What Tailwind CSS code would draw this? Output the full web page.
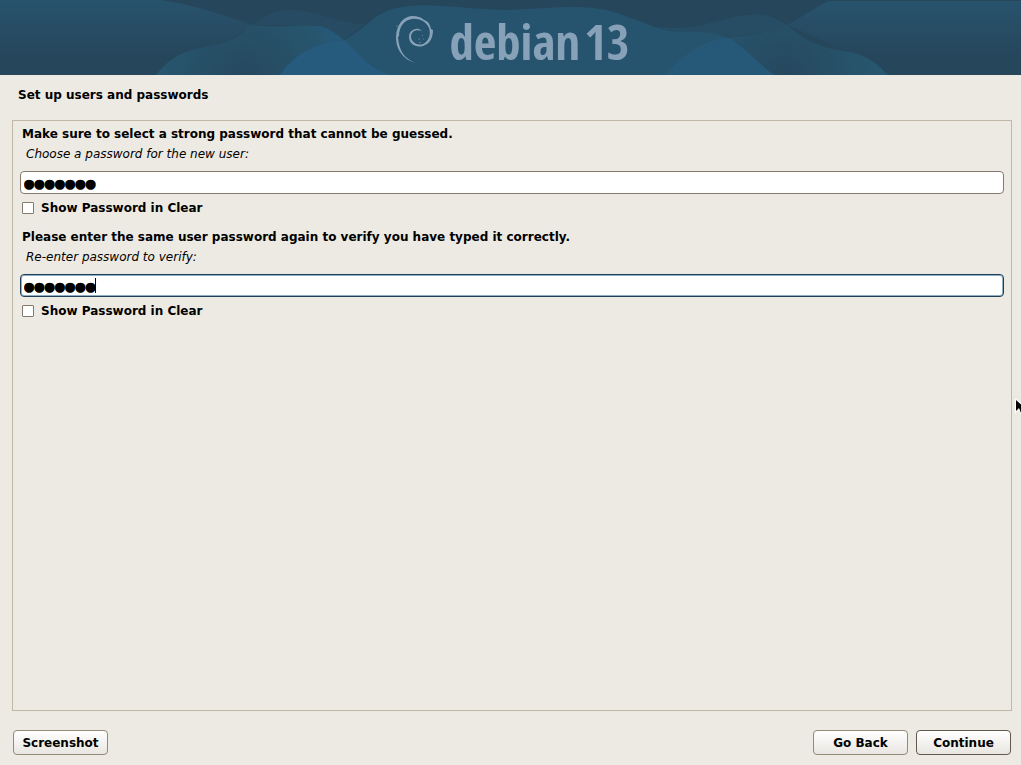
<!DOCTYPE html>
<html lang="en">
<head>
    <meta charset="UTF-8">
    <meta name="viewport" content="width=device-width, initial-scale=1.0">
    <script src="https://cdn.jsdelivr.net/npm/@tailwindcss/browser@4"></script>
    <title>Debian Installer</title>
</head>
<body class="relative flex flex-col h-screen overflow-hidden bg-[#edeae3] text-black text-[12px] leading-4 font-['DejaVu_Sans',sans-serif]">

    <!-- Banner -->
    <header class="relative h-[75px] shrink-0 bg-[#26465b] flex justify-center">
        <svg class="absolute inset-0 w-full h-full" viewBox="0 0 1021 75" preserveAspectRatio="none" aria-hidden="true">
            <defs>
                <linearGradient id="side" x1="0" y1="0" x2="0" y2="1">
                    <stop offset="0" stop-color="#28536d"/>
                    <stop offset="0.75" stop-color="#26465b"/>
                </linearGradient>
                <radialGradient id="hill-left" gradientUnits="userSpaceOnUse" cx="245" cy="80" r="95">
                    <stop offset="0" stop-color="#26485e"/>
                    <stop offset="0.9" stop-color="#27566f"/>
                    <stop offset="1" stop-color="#265878"/>
                </radialGradient>
                <radialGradient id="hill-right" gradientUnits="userSpaceOnUse" cx="785" cy="75" r="90">
                    <stop offset="0" stop-color="#26485e"/>
                    <stop offset="1" stop-color="#27566f"/>
                </radialGradient>
            </defs>
            <path fill="url(#side)" d="M0 0H160C190 4 215 12 252 25L228 41C200 51 180 45 156 75H0Z"/>
            <path fill="url(#side)" d="M1021 1H829C810 10 800 19 787 25L850 52L888 75H1021Z"/>
            <path fill="#28536d" fill-opacity="0.4" d="M252 25C268 12 280 10 293 10C318 11 335 23 365 24L344 40Q330 26 308 25Z"/>
            <path fill="#28536d" fill-opacity="0.5" d="M654 26C700 34 720 15 755 14.500C770 14 779 20 787 25C765 34 745 34 729 38C710 31 690 33 665 30Z"/>
            <path fill="url(#hill-left)" d="M156 75C180 45 200 51 228 41C240 37 246 28 252 25C280 28 300 24 320 26C350 34 362 70 390 75Z"/>
            <path fill="url(#hill-right)" d="M787 25C810 46 830 49 850 52C870 56 880 67 888 75H664L729 38C750 34 770 33 787 25Z"/>
            <path fill="#26536d" d="M280 75C300 47 322 43 344 40C365 30 375 10 402 7C430 2 470 10 510 10C550 8 595 2 625 16C650 24 658 31 680 31.500C700 32 710 31 729 38C750 50 765 70 775 75Z"/>
            <path fill="#265b7d" d="M280 75C300 47 322 43 344 40C360 55 370 70 392 75Z"/>
            <path fill="#265b7d" fill-opacity="0.7" d="M664 75C685 55 700 40 729 38C745 48 760 66 775 75Z"/>
        </svg>
        <div class="relative flex items-center gap-4 ml-1 text-[#87a1b8]">
            <svg class="w-[38px] h-12 mt-1" viewBox="0 0 38 48" fill="currentColor" aria-hidden="true">
                <path d="M21 47C8 44 1 33 1 22C1 8 9 0 18 0C22 0 26 1 29 4C33 5 35 8 36 13L38 14C38 23 34 28 28 30C21 32 14 28 14 21C14 16 18 12 24 13L27 15C21 13 17 15 16 20C16 26 22 30 28 28C34 25 36 18 34 12C31 5 23 2 17 3C9 4 4 11 4 20L3 21C4 34 9 43 21 47Z"/>
                <path d="M1 10L2 9L3 10L2 11ZM23 23L24 22L25 23L24 24ZM28 23L29 22L29 24ZM24 26H26V27H24ZM27 19H28V20H27Z" opacity="0.5"/>
            </svg>
            <div class="flex items-baseline gap-1 mt-2 font-['Open_Sans_Condensed','Noto_Sans_Condensed','Roboto_Condensed',Lato,sans-serif] font-bold text-[49px] leading-[75px]">
                <span>debian</span><span class="font-black">13</span>
            </div>
        </div>
    </header>

    <h1 class="px-[18px] pt-3 font-bold">Set up users and passwords</h1>

    <form id="users" class="flex-1 mx-3 mt-[17px] mr-[9px] px-[7px] pt-[5px] border border-[#bfb8a5]">
        <section>
            <h2 class="px-0.5 font-bold">Make sure to select a strong password that cannot be guessed.</h2>
            <label for="password" class="block mt-1 px-1.5 italic">Choose a password for the new user:</label>
            <input id="password" type="text" value="●●●●●●●" autocomplete="off" class="block w-full h-[23px] mt-[9px] px-[3px] bg-white border border-[#857a6d] rounded-[4px] font-['DejaVu_Sans_Mono',monospace] text-[17px] outline-none">
            <label class="flex items-center gap-[7px] mt-1.5 px-0.5 font-bold">
                <input type="checkbox" class="appearance-none size-3 bg-white border border-[#857a6d] rounded-[1px] checked:bg-[#26465b]">
                Show Password in Clear
            </label>
        </section>
        <section class="mt-[13px]">
            <h2 class="px-0.5 font-bold">Please enter the same user password again to verify you have typed it correctly.</h2>
            <label for="verify" class="block mt-1 px-1.5 italic">Re-enter password to verify:</label>
            <div class="relative mt-[9px]">
                <input id="verify" type="text" value="●●●●●●●" autocomplete="off" class="block w-full h-[23px] px-[3px] bg-white border border-[#1e3f55] rounded-[4px] inset-ring inset-ring-[#8fb0c4] font-['DejaVu_Sans_Mono',monospace] text-[17px] outline-none">
                <span class="absolute left-[75px] top-1 w-px h-[15px] bg-black"></span>
            </div>
            <label class="flex items-center gap-[7px] mt-1.5 px-0.5 font-bold">
                <input type="checkbox" class="appearance-none size-3 bg-white border border-[#857a6d] rounded-[1px] checked:bg-[#26465b]">
                Show Password in Clear
            </label>
        </section>
    </form>

    <!-- Actions -->
    <footer class="flex gap-2 pl-[13px] pr-2.5 pt-[19px] pb-2.5">
        <button type="button" class="w-[95px] h-[25px] mr-auto bg-linear-to-b from-white to-[#e9e6e1] border border-[#958a78] rounded-[4px] font-bold">Screenshot</button>
        <button type="button" class="w-[95px] h-[25px] bg-linear-to-b from-white to-[#e9e6e1] border border-[#958a78] rounded-[4px] font-bold">Go Back</button>
        <button type="submit" form="users" class="w-[95px] h-[25px] bg-linear-to-b from-white to-[#e9e6e1] border border-[#61584e] rounded-[4px] font-bold">Continue</button>
    </footer>

    <!-- Mouse pointer -->
    <svg class="absolute left-[1015px] top-[399px] w-[11px] h-[17px]" viewBox="0 0 11 17" aria-hidden="true">
        <path d="M1 1V12L4 9L6 14L8 13L6 8H9Z" stroke="#fff" stroke-width="2" paint-order="stroke"/>
    </svg>
</body>
</html>
